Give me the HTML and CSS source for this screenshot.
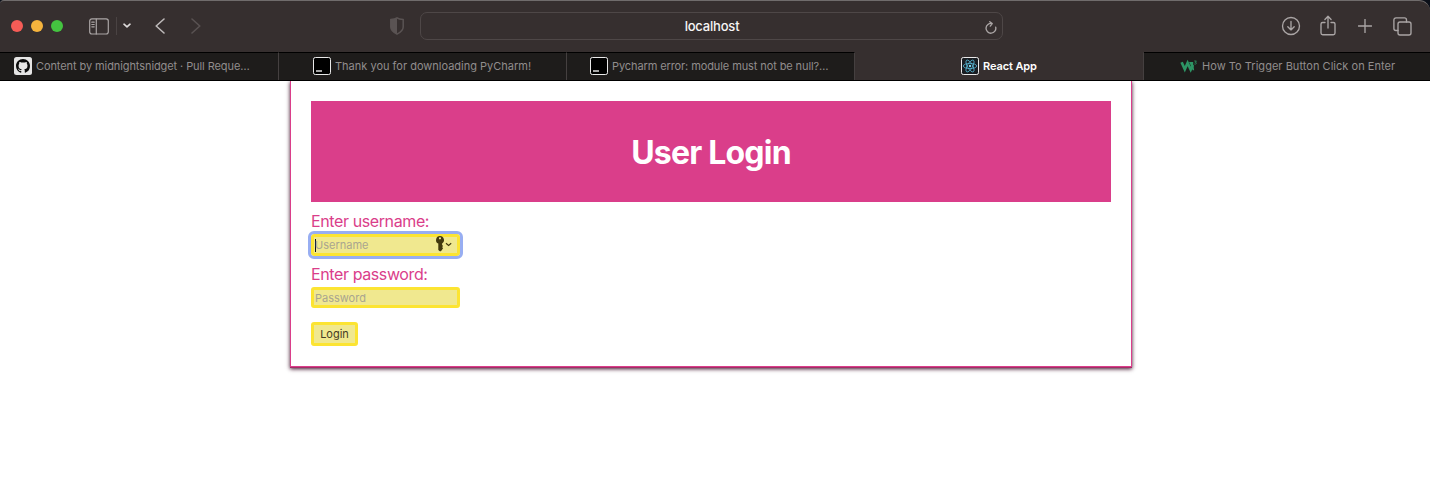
FILE: index.html
```
<!DOCTYPE html>
<html lang="en">
<head>
<meta charset="utf-8">
<title>React App</title>
<link rel="stylesheet" href="styles.css">
</head>
<body>
<div class="browser">
<header class="toolbar">
  <div class="lights"><i class="light red"></i><i class="light amber"></i><i class="light green"></i></div>
  <svg class="ico sidebar" width="20" height="17" viewBox="0 0 20 17"><rect x=".7" y=".8" width="18.6" height="15.2" rx="2.2"/><path d="M7.3 1v15M2.8 4.2h2.4M2.8 6.5h2.4M2.8 8.8h2.4"/></svg>
  <i class="rule"></i>
  <svg class="ico menu" width="8" height="6" viewBox="0 0 8 6"><path d="M1 1.2l3 2.7 3-2.7"/></svg>
  <svg class="ico back" width="10" height="16" viewBox="0 0 10 16"><path d="M9 1L1.2 8 9 15"/></svg>
  <svg class="ico forward" width="10" height="16" viewBox="0 0 10 16"><path d="M1 1l7.8 7L1 15"/></svg>
  <svg class="shield" width="14" height="18" viewBox="0 0 14 18"><path class="outline" d="M7 .8C5.4 2 3.2 2.4.8 2.6V10c0 3.3 2.8 5.4 6.2 7.1 3.4-1.7 6.2-3.8 6.2-7.1V2.6C10.8 2.4 8.6 2 7 .8z"/><path class="half" d="M7 .8C5.4 2 3.2 2.4.8 2.6V10c0 3.3 2.8 5.4 6.2 7.1z"/></svg>
  <div class="address">
    <span class="host">localhost</span>
    <svg class="ico reload" width="12" height="13" viewBox="0 0 12 13"><path d="M10.7 6.2A4.9 4.9 0 1 1 6.9 2.5M4.8.7l2.4 1.9-1.9 2.5"/></svg>
  </div>
  <svg class="ico download" width="20" height="20" viewBox="0 0 20 20"><circle cx="10" cy="10" r="8.5"/><path d="M10 5.5v8.3M6.8 10.7L10 13.9l3.2-3.2"/></svg>
  <svg class="ico share" width="16" height="21" viewBox="0 0 16 21"><path d="M5 7.5H2.7c-1 0-1.7.6-1.7 1.6V18c0 1 .7 1.7 1.7 1.7h10.6c1 0 1.7-.7 1.7-1.7V9.1c0-1-.7-1.6-1.7-1.6H11M8 13V1.5M4.9 4.5L8 1.3l3.1 3.2"/></svg>
  <svg class="ico plus" width="14" height="14" viewBox="0 0 14 14"><path d="M7 .4v13.2M.4 7h13.2"/></svg>
  <svg class="ico overview" width="19" height="19" viewBox="0 0 19 19"><rect x="5" y="5" width="13" height="13" rx="2"/><path d="M5 13.5H3c-1.3 0-2.1-.8-2.1-2.1V3C.9 1.7 1.7.9 3 .9h8.4c1.3 0 2.1.8 2.1 2.1v2"/></svg>
</header>
<nav class="tabs">
  <div class="tab tab-github">
    <svg class="favicon" width="18" height="18" viewBox="0 0 18 18"><rect width="18" height="18" rx="2.5" fill="#e6e5e5"/><g transform="translate(2 2) scale(.875)"><path fill="#0c0c0c" d="M8 0C3.58 0 0 3.58 0 8c0 3.54 2.29 6.53 5.47 7.59.4.07.55-.17.55-.38v-1.49c-2.01.37-2.53-.49-2.69-.94-.09-.23-.48-.94-.82-1.13-.28-.15-.68-.52-.01-.53.63-.01 1.08.58 1.23.82.72 1.21 1.87.87 2.33.66.07-.52.28-.87.51-1.07-1.78-.2-3.64-.89-3.64-3.95 0-.87.31-1.59.82-2.15-.08-.2-.36-1.02.08-2.12 0 0 .67-.21 2.2.82a7.6 7.6 0 0 1 4 0c1.53-1.04 2.2-.82 2.2-.82.44 1.1.16 1.92.08 2.12.51.56.82 1.27.82 2.15 0 3.07-1.87 3.75-3.65 3.95.29.25.54.73.54 1.48v2.2c0 .21.15.46.55.38A8.01 8.01 0 0 0 16 8c0-4.42-3.58-8-8-8z"/></g></svg>
    <span>Content by midnightsnidget · Pull Reque…</span>
  </div>
  <div class="tab tab-download">
    <svg class="favicon" width="18" height="18" viewBox="0 0 18 18"><rect x=".5" y=".5" width="17" height="17" rx="1.8" fill="#000" stroke="#e9e9e9"/><path d="M3 14h6" stroke="#fff" stroke-width="1.3"/></svg>
    <span>Thank you for downloading PyCharm!</span>
  </div>
  <div class="tab tab-error">
    <svg class="favicon" width="18" height="18" viewBox="0 0 18 18"><rect x=".5" y=".5" width="17" height="17" rx="1.8" fill="#000" stroke="#e9e9e9"/><path d="M3 14h6" stroke="#fff" stroke-width="1.3"/></svg>
    <span>Pycharm error: module must not be null?…</span>
  </div>
  <div class="tab tab-react active">
    <svg class="favicon" width="18" height="18" viewBox="0 0 18 18"><rect x=".5" y=".5" width="17" height="17" rx="1.8" fill="#191d22" stroke="#e9e9e9"/><g fill="none" stroke="#55b4d0" stroke-width=".8"><ellipse cx="9" cy="9" rx="6.7" ry="2.6"/><ellipse cx="9" cy="9" rx="6.7" ry="2.6" transform="rotate(60 9 9)"/><ellipse cx="9" cy="9" rx="6.7" ry="2.6" transform="rotate(120 9 9)"/></g><circle cx="9" cy="9" r="1.2" fill="#7bd5ef"/></svg>
    <span>React App</span>
  </div>
  <div class="tab tab-w3">
    <svg class="favicon" width="18" height="18" viewBox="0 0 18 18"><path d="M1.6 5.2l3.2 7L7.6 6l3.1 6.6L12.9 8" fill="none" stroke="#2d9565" stroke-width="2.7"/><path d="M9 5h4.2v2.6l1 5.6h-1.5L11 9z" fill="#2d9565"/><path d="M14.2 4h2.2l-1.2 1.3c1.9 0 1.6 2.3-.9 1.7" fill="none" stroke="#2d9565" stroke-width=".8"/></svg>
    <span>How To Trigger Button Click on Enter</span>
  </div>
</nav>
<main class="page">
  <section class="card">
    <div class="banner"><h1>User Login</h1></div>
    <form class="login">
      <label for="user">Enter username:</label>
      <div class="field focused" id="user">
        <i class="caret"></i><span class="hint">Username</span>
        <svg class="key" width="18" height="16" viewBox="0 0 18 16"><path fill="#42390d" fill-rule="evenodd" d="M5 0a4 4 0 0 1 2.1 7.4V9l1 1-1 1.1 1 1.1-1 1.2v.7L5.2 15.5 3.3 14V7.6A4 4 0 0 1 5 0zm0 1.2a1.1 1.1 0 1 0 0 2.2 1.1 1.1 0 0 0 0-2.2z"/><path d="M11 7.3l2.6 2.2 2.6-2.2" fill="none" stroke="#42390d" stroke-width="1.2"/></svg>
      </div>
      <label class="second" for="pass">Enter password:</label>
      <div class="field" id="pass"><span class="hint">Password</span></div>
      <button type="button" class="submit">Login</button>
    </form>
  </section>
</main>
</div>
</body>
</html>
```
FILE: styles.css
```
* { box-sizing: border-box; }
html { background: #fff; }
body { margin: 0; font-family: Inter, "Liberation Sans", sans-serif; }
svg, i { display: block; flex: none; }
.browser { height: 499px; overflow: hidden; background: linear-gradient(#0b0f18 0 12px, #fff 12px); }

.toolbar { display: flex; align-items: center; height: 52px; padding: 0 18px 1px 11px; background: #362f2f; border-top: 1px solid #706c6c; border-radius: 4px 11px 0 0; }
.lights { display: flex; gap: 8px; }
.light { width: 12px; height: 12px; border-radius: 50%; }
.red { background: #f65c56; }
.amber { background: #f6b43d; }
.green { background: #44c440; }
.ico { fill: none; stroke: #aaa5a5; stroke-width: 1.35; stroke-linecap: round; stroke-linejoin: round; }
.sidebar { margin-left: 26px; stroke-width: 1.2; }
.rule { width: 1px; height: 18px; margin-left: 7px; background: #4a4343; }
.menu { margin-left: 6px; stroke: #dedbdb; stroke-width: 1.6; }
.back { margin-left: 24px; stroke: #bdb9b9; stroke-width: 1.6; }
.forward { margin-left: 26px; stroke: #595252; stroke-width: 1.6; }
.shield { margin-left: 189px; }
.outline { fill: none; stroke: #5a5353; stroke-width: 1.5; }
.half { fill: #5a5353; }
.address { display: grid; grid-template-columns: 1fr auto 1fr; align-items: center; width: 583px; height: 28px; margin-left: 16px; padding: 0 5px; border: 1px solid #4e4747; border-radius: 7px; }
.host { grid-column: 2; padding-left: 1px; color: #f6f5f5; font-size: 13px; font-weight: 500; letter-spacing: -.2px; line-height: 20px; }
.reload { justify-self: end; margin-top: 2px; }
.download { margin-left: 278px; }
.share { margin: -2px 0 0 19px; }
.plus { margin-left: 22px; }
.overview { margin-left: 21px; }

.tabs { display: grid; grid-template-columns: 279px 288px 288px 289px 1fr; height: 29px; border-bottom: 1px solid #000; }
.tab { display: flex; align-items: center; gap: 4px; background: #1e1c1b; border-top: 1px solid #000; border-right: 1px solid #454040; color: #918d8d; font-size: 11px; line-height: 14px; white-space: nowrap; }
.tab span { padding-bottom: 2px; }
.tab svg { margin-top: -1px; }
.tab:last-child { border-right: 0; }
.tab.active { background: #362f2f; border-top-color: #362f2f; color: #fff; font-weight: 600; letter-spacing: -.1px; }
.tab-github { padding-left: 14px; letter-spacing: -.09px; }
.tab-download { padding-left: 34px; }
.tab-error { padding-left: 23px; letter-spacing: -.1px; }
.tab-react { padding-left: 106px; }
.tab-w3 { padding-left: 36px; letter-spacing: .03px; }

.page { height: 418px; overflow: hidden; padding-left: 290px; background: #fff; }
.card { width: 842px; height: 287px; margin-top: -1px; padding: 20px; border: 1px solid #da3e8a; box-shadow: 0 1px 0 #a42c66, 0 2px 4px #3d1029; }
.banner { display: flex; align-items: center; justify-content: center; height: 101px; background: #da3e8a; }
h1 { margin: 2px 0 0; color: #fff; font-size: 32px; font-weight: 700; line-height: 38px; letter-spacing: -.8px; }
.login { display: flex; flex-direction: column; align-items: flex-start; padding-top: 9px; }
label { color: #da3e8a; font-size: 16px; line-height: 20px; letter-spacing: -.39px; }
.second { margin-top: 8px; }
.field { display: flex; align-items: center; width: 149px; height: 21px; margin-top: 3px; padding-left: 1px; border: 3px solid #fce432; border-radius: 3px; background: #f0e88f; font-size: 11px; line-height: 14px; }
.focused { height: 22px; outline: 3px solid #98aef2; outline-offset: 0; }
.hint { color: #a9a58f; }
.caret { width: 1px; height: 13px; margin-right: -1px; background: #111; }
.key { margin: -2px 4px 0 auto; }
.submit { width: 47px; height: 24px; margin-top: 14px; padding: 0; border: 3px solid #fce432; border-radius: 3px; background: #f0e88f; color: #453b25; font: 11px/14px Inter, sans-serif; }
```
